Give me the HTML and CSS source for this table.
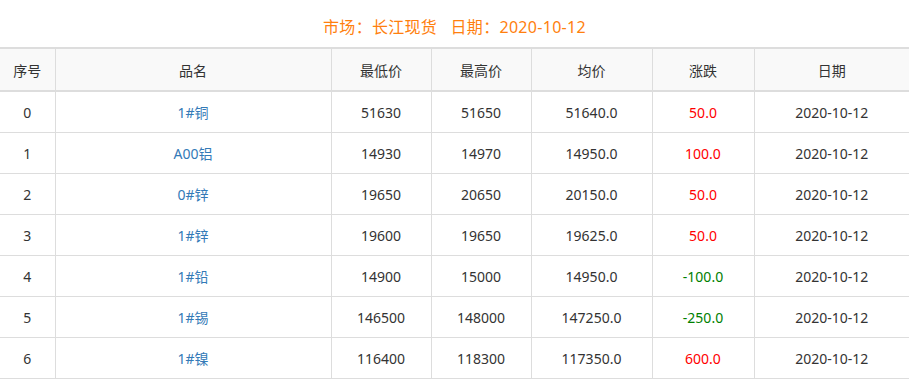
FILE: index.html
```html
<!DOCTYPE html>
<html>
<head>
<meta charset="utf-8">
<link rel="stylesheet" href="styles.css">
</head>
<body>
<div class="title">市场：长江现货&nbsp;&nbsp;&nbsp;日期：2020-10-12</div>
<table class="price-table">
  <colgroup>
    <col class="c1"><col class="c2"><col class="c3"><col class="c4"><col class="c5"><col class="c6"><col class="c7">
  </colgroup>
  <thead>
    <tr><th>序号</th><th>品名</th><th>最低价</th><th>最高价</th><th>均价</th><th>涨跌</th><th>日期</th></tr>
  </thead>
  <tbody>
    <tr><td>0</td><td class="name">1#铜</td><td>51630</td><td>51650</td><td>51640.0</td><td class="up">50.0</td><td>2020-10-12</td></tr>
    <tr><td>1</td><td class="name">A00铝</td><td>14930</td><td>14970</td><td>14950.0</td><td class="up">100.0</td><td>2020-10-12</td></tr>
    <tr><td>2</td><td class="name">0#锌</td><td>19650</td><td>20650</td><td>20150.0</td><td class="up">50.0</td><td>2020-10-12</td></tr>
    <tr><td>3</td><td class="name">1#锌</td><td>19600</td><td>19650</td><td>19625.0</td><td class="up">50.0</td><td>2020-10-12</td></tr>
    <tr><td>4</td><td class="name">1#铅</td><td>14900</td><td>15000</td><td>14950.0</td><td class="down">-100.0</td><td>2020-10-12</td></tr>
    <tr><td>5</td><td class="name">1#锡</td><td>146500</td><td>148000</td><td>147250.0</td><td class="down">-250.0</td><td>2020-10-12</td></tr>
    <tr><td>6</td><td class="name">1#镍</td><td>116400</td><td>118300</td><td>117350.0</td><td class="up">600.0</td><td>2020-10-12</td></tr>
  </tbody>
</table>
</body>
</html>
```
FILE: styles.css
```css
html, body {
  margin: 0;
  padding: 0;
  background: #fff;
  font-family: "Noto Sans", "Noto Sans CJK SC", sans-serif;
  color: #333;
}
.title {
  height: 47px;
  line-height: 54px;
  text-align: center;
  font-size: 16px;
  letter-spacing: 0.3px;
  color: #ff7f0e;
}
.price-table {
  width: 909px;
  border-collapse: collapse;
  table-layout: fixed;
  font-size: 14px;
}
.c1 { width: 55px; }
.c2 { width: 276px; }
.c3 { width: 100px; }
.c4 { width: 100px; }
.c5 { width: 121px; }
.c6 { width: 102px; }
.c7 { width: 155px; }
.price-table th,
.price-table td {
  border: 1px solid #ddd;
  text-align: center;
  padding: 0;
  font-weight: normal;
}
.price-table th:first-child,
.price-table td:first-child { border-left: none; }
.price-table th:last-child,
.price-table td:last-child { border-right: none; }
.price-table thead th {
  height: 41px;
  background: #f9f9f9;
  border-top: 2px solid #ddd;
  border-bottom: 2px solid #ddd;
}
.price-table tbody td {
  height: 40px;
}
.name { color: #337ab7; }
.up { color: #ff0000; }
.down { color: #008000; }
```
